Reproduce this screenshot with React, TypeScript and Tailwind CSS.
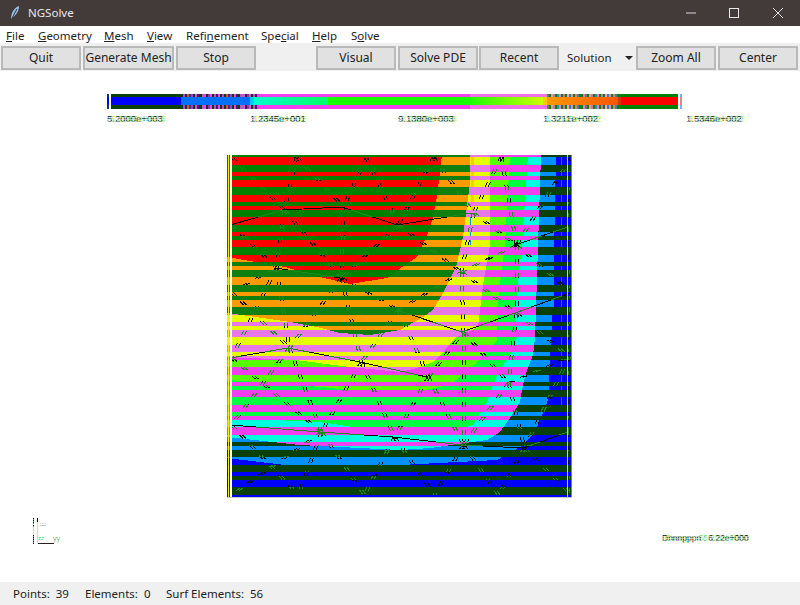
import React from "react";

const font = { fontFamily: '"Noto Sans", "Open Sans", sans-serif' };

type P = [number, number];
const toPts = (a: P[]) => a.map((p) => p.join(",")).join(" ");

const regions: { c: string; b?: string; pts: P[] }[] = [
  { c: "#0090ff", pts: [[227,155],[556,155],[553,300],[548,400],[535,432],[520,447],[497,460],[400,465],[285,465],[227,458]] },
  { c: "#00ffdd", b: "#f040f0", pts: [[227,155],[541,155],[535,338],[533,355],[527,370],[523,385],[520,402],[510,418],[500,432],[487,440],[430,448],[400,450],[300,445],[227,437]] },
  { c: "#00ff40", pts: [[227,155],[528,155],[522,245],[515,310],[517,338],[510,355],[500,370],[493,385],[487,402],[473,425],[450,432],[400,432],[360,428],[320,422],[227,418]] },
  { c: "#55ff00", pts: [[227,155],[510,155],[505,245],[498,300],[497,340],[480,360],[450,385],[400,395],[300,385],[227,380]] },
  { c: "#e6ff00", b: "#e878e8", pts: [[227,155],[490,155],[490,245],[483,285],[478,327],[455,338],[445,350],[433,362],[417,368],[400,372],[350,367],[295,360],[227,357]] },
  { c: "#ff9900", b: "#0f7f0f", pts: [[227,155],[470,155],[470,183],[463,237],[456,267],[443,293],[433,310],[423,317],[400,330],[370,335],[340,333],[317,327],[290,322],[227,313]] },
  { c: "#ff0000", b: "#008000", pts: [[227,155],[442,155],[437,197],[433,217],[428,233],[417,257],[402,267],[387,278],[350,284],[320,277],[285,267],[227,257]] },
];

const bands: { y: number; h: number; a: boolean }[] = (() => {
  const lens = [7.5, 7.5, 7.5, 3.75, 3.75];
  const out: { y: number; h: number; a: boolean }[] = [];
  let y = 149.5, a = false, i = 0;
  while (y < 497) {
    const n = y + lens[i % 5];
    const t = Math.max(155, Math.round(y));
    const e = Math.min(497, Math.round(n));
    if (e > t) out.push({ y: t, h: e - t, a });
    y = n; a = !a; i++;
  }
  return out;
})();

const N: Record<string, P> = {
  a0:[230,157],a1:[295,157],a2:[365,158],a3:[432,157],a4:[500,157],a5:[570,157],
  b0:[230,225],b1:[283,210],b2:[342,207],b3:[397,225],b4:[472,213],b5:[515,245],b6:[568,227],
  c0:[230,292],c1:[275,268],c2:[340,278],c3:[397,310],c4:[460,272],c5:[515,313],c6:[570,293],
  d0:[230,358],d1:[288,348],d2:[360,362],d3:[427,377],d4:[462,332],d5:[507,383],d6:[568,357],
  e0:[230,425],e1:[320,432],e2:[393,437],e3:[462,445],e4:[523,448],e5:[568,432],
  f0:[230,495],f1:[297,495],f2:[363,495],f3:[433,495],f4:[497,495],f5:[570,495],
};
const edges = "a0-b1 a1-b1 a1-b2 a2-b2 a2-b3 a3-b3 a3-b4 a4-b4 a4-b5 a5-b5 a5-b6 b0-b1 b1-b2 b2-b3 b3-b4 b4-b5 b5-b6 b0-c1 b1-c1 b1-c2 b2-c2 b3-c2 b3-c4 b4-c4 c4-b5 b5-c5 b5-c6 b6-c6 c0-c1 c1-c2 c2-c3 c3-c4 c4-c5 c5-c6 c0-d1 c1-d1 c1-d0 c2-d1 c2-d2 c3-d2 c3-d3 c3-d4 c4-d4 d4-c5 c5-d5 c5-d6 c6-d6 d0-d1 d1-d2 d2-d3 d3-d4 d4-d5 d5-d6 d0-e1 d1-e0 d1-e1 d2-e1 d2-e2 d3-e2 d3-e3 d4-e3 d5-e3 d5-e4 d6-e4 d6-e5 e0-e1 e1-e2 e2-e3 e3-e4 e4-e5 e0-f1 e1-f0 e1-f1 e1-f2 e2-f2 e2-f3 e3-f3 e3-f4 e4-f4 e4-f5 e5-f5".split(" ").map((s) => s.split("-"));

function Mesh({ color }: { color: string }) {
  return (
    <g stroke={color} fill="none" strokeWidth="1" shapeRendering="crispEdges">
      {edges.map(([p, q], i) => {
        const [x1, y1] = N[p];
        const [x2, y2] = N[q];
        const flat = Math.abs(y2 - y1) < Math.abs(x2 - x1) * 0.4;
        if (flat) return <line key={i} x1={x1} y1={y1} x2={x2} y2={y2} />;
        return (
          <g key={i} strokeDasharray="5 9">
            <line x1={x1} y1={y1} x2={x2} y2={y2} />
            <line x1={x1 + 3} y1={y1} x2={x2 + 3} y2={y2} />
          </g>
        );
      })}
    </g>
  );
}

const mixLow = ["#0a400a","#c040d0","#0a400a","#e05040","#3a3090","#a040c0","#0a400a","#f040f0","#402060","#0a400a","#b060c0","#f040f0","#302030","#8040a0","#f040f0","#0a400a","#c050c0","#402050","#f040f0"];
const mixHigh = ["#f070e0","#608060","#0f7f0f","#f090c0","#c08090","#0f7f0f","#3090a0","#e080d0","#0f7f0f","#d070a0","#0f7f0f","#f0a0c0","#3080a0","#e090b0","#0f7f0f","#d08090","#4080a0","#0f7f0f","#0f7f0f"];

function Label({ x, y, text, alt, size = 9.5 }: { x: number; y: number; text: string; alt: string; size?: number }) {
  return (
    <g fontFamily='"Liberation Sans", sans-serif' fontSize={size} clipPath="url(#labelRows)">
      <text x={x + 2} y={y} fill="#00d8f0" opacity="0.8">{alt}</text>
      <text x={x + 4} y={y} fill="#f0f000" opacity="0.7">{alt}</text>
      <text x={x} y={y} fill="#111">{text}</text>
    </g>
  );
}

function Scene() {
  return (
    <svg width="800" height="511" viewBox="0 71 800 511" className="block">
      <defs>
        <clipPath id="rowsA">
          {bands.filter((b) => b.a).map((b) => <rect key={b.y} x="227" y={b.y} width="345" height={b.h} />)}
        </clipPath>
        <clipPath id="rowsB">
          {bands.filter((b) => !b.a).map((b) => <rect key={b.y} x="227" y={b.y} width="345" height={b.h} />)}
        </clipPath>
        <clipPath id="labelRows">
          {[114, 116, 118, 120, 122, 518, 520, 522, 525, 527, 529, 533, 535, 537, 539, 541, 543].map((y) => (
            <rect key={y} x="0" y={y} width="800" height="1.6" />
          ))}
        </clipPath>
        <linearGradient id="g1" x1="0" x2="1" y1="0" y2="0">
          <stop offset="0" stopColor="#00ffcc" />
          <stop offset="1" stopColor="#00ff66" />
        </linearGradient>
        <linearGradient id="g2" x1="0" x2="1" y1="0" y2="0">
          <stop offset="0" stopColor="#18ff00" />
          <stop offset="1" stopColor="#ccff00" />
        </linearGradient>
        <linearGradient id="g3" x1="0" x2="1" y1="0" y2="0">
          <stop offset="0" stopColor="#ff9900" />
          <stop offset="1" stopColor="#ff5500" />
        </linearGradient>
      </defs>

      {/* colour bar */}
      <g shapeRendering="crispEdges">
        <rect x="107" y="94" width="2" height="15" fill="#0a3a6a" />
        <rect x="107" y="97" width="2" height="8" fill="#0000ff" />
        <rect x="111" y="94" width="70" height="15" fill="#0a400a" />
        <rect x="181" y="94" width="78" height="15" fill="#402050" />
        {mixLow.concat(mixLow).map((c, i) => <rect key={i} x={181 + i * 2.05} y="94" width="2.05" height="15" fill={c} />)}
        <rect x="258" y="94" width="287" height="15" fill="#f040f0" />
        <rect x="470" y="94" width="75" height="15" fill="#f070e8" />
        {mixHigh.concat(mixHigh).map((c, i) => <rect key={i} x={545 + i * 2.0} y="94" width="2" height="15" fill={c} />)}
        <rect x="621" y="94" width="56" height="15" fill="#008000" />
        <rect x="111" y="97" width="70" height="8" fill="#0000ff" />
        <rect x="181" y="97" width="69" height="8" fill="#0070ff" />
        <rect x="250" y="97" width="4" height="8" fill="#00ccff" />
        <rect x="254" y="97" width="74" height="8" fill="url(#g1)" />
        <rect x="328" y="97" width="140" height="8" fill="#18ff00" />
        <rect x="468" y="97" width="75" height="8" fill="url(#g2)" />
        <rect x="543" y="97" width="4" height="8" fill="#ffcc00" />
        <rect x="547" y="97" width="71" height="8" fill="url(#g3)" />
        <rect x="618" y="97" width="3" height="8" fill="#e03000" />
        <rect x="621" y="97" width="56" height="8" fill="#ff0000" />
        <rect x="677" y="94" width="1" height="15" fill="#0f7f0f" />
        <rect x="680" y="94" width="2" height="15" fill="#78b0f8" />
        <rect x="680" y="97" width="2" height="8" fill="#f08080" />
      </g>

      <Label x={107} y={122} text="5.2000e+003" alt="5.2000e+003" />
      <Label x={250} y={122} text="1.2345e+001" alt="1.6552e-002" />
      <Label x={398} y={122} text="9.1380e+003" alt="1.2380e+003" />
      <Label x={543} y={122} text="1.3211e+002" alt="1.1045e+002" />
      <Label x={686} y={122} text="1.5346e+002" alt="1.3660e+002" />

      {/* plot */}
      <g shapeRendering="crispEdges">
        <rect x="227" y="155" width="344" height="342" fill="#0000ff" clipPath="url(#rowsA)" />
        <rect x="227" y="155" width="344" height="342" fill="#0a400a" clipPath="url(#rowsB)" />
        <g clipPath="url(#rowsA)">
          {regions.map((r, i) => <polygon key={i} points={toPts(r.pts)} fill={r.c} />)}
          <rect x="552" y="155" width="2" height="160" fill="#0090ff" />
          <rect x="561" y="155" width="1" height="250" fill="#0070ff" />
          <rect x="471" y="155" width="3" height="60" fill="#ffcc00" />
          <rect x="470" y="215" width="1" height="30" fill="#0090ff" />
        </g>
        <g clipPath="url(#rowsB)">
          {regions.filter((r) => r.b).map((r, i) => <polygon key={i} points={toPts(r.pts)} fill={r.b} />)}
        </g>
        <g clipPath="url(#rowsA)"><Mesh color="#0a0a0a" /></g>
        <g clipPath="url(#rowsB)"><Mesh color="#1c8a1c" /></g>
        <rect x="228" y="155" width="1" height="342" fill="#f2f200" />
        <rect x="230" y="155" width="2" height="342" fill="#ffffff" />
        <rect x="567" y="155" width="1" height="342" fill="#b0d0f0" />
        <rect x="571" y="155" width="1" height="342" fill="#50a080" />
        <rect x="227" y="497" width="345" height="1" fill="#c8c8c8" />
      </g>

      {/* axes */}
      <g shapeRendering="crispEdges">
        <rect x="33" y="518" width="1" height="26" fill="#111" clipPath="url(#labelRows)" />
        <rect x="37" y="518" width="1" height="26" fill="#f0f000" />
        <rect x="37" y="518" width="1" height="4" fill="#111" />
        <rect x="33" y="527" width="1" height="8" fill="#f0f000" />
        <rect x="38" y="543" width="16" height="1" fill="#222" />
      </g>
      <text x="40" y="526" fontFamily='"Liberation Sans", sans-serif' fontSize="6" fill="#666" clipPath="url(#labelRows)">xx</text>
      <text x="38" y="540" fontFamily='"Liberation Sans", sans-serif' fontSize="6" fill="#20d060" clipPath="url(#labelRows)">zz</text>
      <text x="53" y="541" fontFamily='"Liberation Sans", sans-serif' fontSize="7" fill="#50a050" clipPath="url(#labelRows)">yy</text>

      <Label x={662} y={541} text="Dnnnpppn : 6.22e+000" alt="Energy : 66.22e+0000" size={8.5} />
    </svg>
  );
}

function Btn({ w, label }: { w: string; label: string }) {
  return (
    <button className={`${w} h-[24px] shrink-0 bg-[#e1e1e1] border-2 border-[#b9b9b9] text-[12px] leading-none text-[#222] whitespace-nowrap`} style={font}>
      {label}
    </button>
  );
}

function Feather() {
  return (
    <svg width="10" height="14" viewBox="0 0 10 14" className="ml-[10px] mt-[-1px]">
      <path d="M8.5 0.5 C5 2 2.5 5.5 1.8 9.5 L1.5 13 C2 11.5 2.6 10.8 3.8 10 C6.5 8 8.6 4 8.5 0.5 Z" fill="#7fb6ea" stroke="#d8e8f8" strokeWidth="0.6" />
      <path d="M7 3 L1.5 13" stroke="#0d1f3a" strokeWidth="0.8" fill="none" />
    </svg>
  );
}

export default function App() {
  const menu: [string, string, string][] = [
    ["", "F", "ile"], ["", "G", "eometry"], ["", "M", "esh"], ["", "V", "iew"],
    ["Refi", "n", "ement"], ["Spe", "c", "ial"], ["", "H", "elp"], ["S", "o", "lve"],
  ];
  const menuW = ["w-[32px]", "w-[66px]", "w-[43px]", "w-[39px]", "w-[75px]", "w-[51px]", "w-[39px]", "w-[40px]"];
  return (
    <div className="w-[800px] h-[605px] flex flex-col bg-white overflow-hidden" style={font}>
      <div className="h-[26px] bg-[#433a3a] flex items-center shrink-0 text-white">
        <Feather />
        <span className="ml-[8px] text-[11.5px] text-[#e8e8ec]">NGSolve</span>
        <div className="ml-auto flex items-center">
          <svg width="12" height="12" viewBox="0 0 12 12" className="mr-[31px]"><path d="M1 6H11" stroke="#d8d8d8" strokeWidth="1" /></svg>
          <svg width="12" height="12" viewBox="0 0 12 12" className="mr-[32px]"><rect x="1.5" y="1.5" width="9" height="9" fill="none" stroke="#e8e8e8" strokeWidth="1" /></svg>
          <svg width="12" height="12" viewBox="0 0 12 12" className="mr-[16px]"><path d="M1 1L11 11M11 1L1 11" stroke="#e0e0e0" strokeWidth="1" /></svg>
        </div>
      </div>

      <div className="h-[17px] flex items-center pl-[6px] pt-[2px] shrink-0 text-[11.5px] leading-none text-[#222]">
        {menu.map(([a, u, b], i) => (
          <span key={i} className={`${menuW[i]} shrink-0`}>
            {a}<u>{u}</u>{b}
          </span>
        ))}
      </div>

      <div className="h-[28px] bg-[#f0f0f0] flex items-start pt-[3px] pl-[1px] shrink-0">
        <Btn w="w-[80px]" label="Quit" />
        <div className="w-[2px] shrink-0" />
        <Btn w="w-[91px]" label="Generate Mesh" />
        <div className="w-[2px] shrink-0" />
        <Btn w="w-[80px]" label="Stop" />
        <div className="w-[60px] shrink-0" />
        <Btn w="w-[80px]" label="Visual" />
        <div className="w-[2px] shrink-0" />
        <Btn w="w-[80px]" label="Solve PDE" />
        <div className="w-[1px] shrink-0" />
        <Btn w="w-[80px]" label="Recent" />
        <div className="w-[77px] h-[24px] shrink-0 flex items-center text-[11.5px] text-[#222] pl-[8px]">
          <span>Solution</span>
          <svg width="8" height="4" viewBox="0 0 8 4" className="ml-[13px] shrink-0"><path d="M0 0H8L4 4Z" fill="#222" /></svg>
        </div>
        <Btn w="w-[80px]" label="Zoom All" />
        <div className="w-[2px] shrink-0" />
        <Btn w="w-[80px]" label="Center" />
      </div>

      <div className="flex-1 min-h-0">
        <Scene />
      </div>

      <div className="h-[23px] bg-[#f0f0f0] flex items-center shrink-0 text-[11.5px] text-[#222] whitespace-pre">
        <span className="ml-[13px] w-[72px]">Points:  39</span>
        <span className="w-[81px]">Elements:  0</span>
        <span>Surf Elements:  56</span>
      </div>
    </div>
  );
}
